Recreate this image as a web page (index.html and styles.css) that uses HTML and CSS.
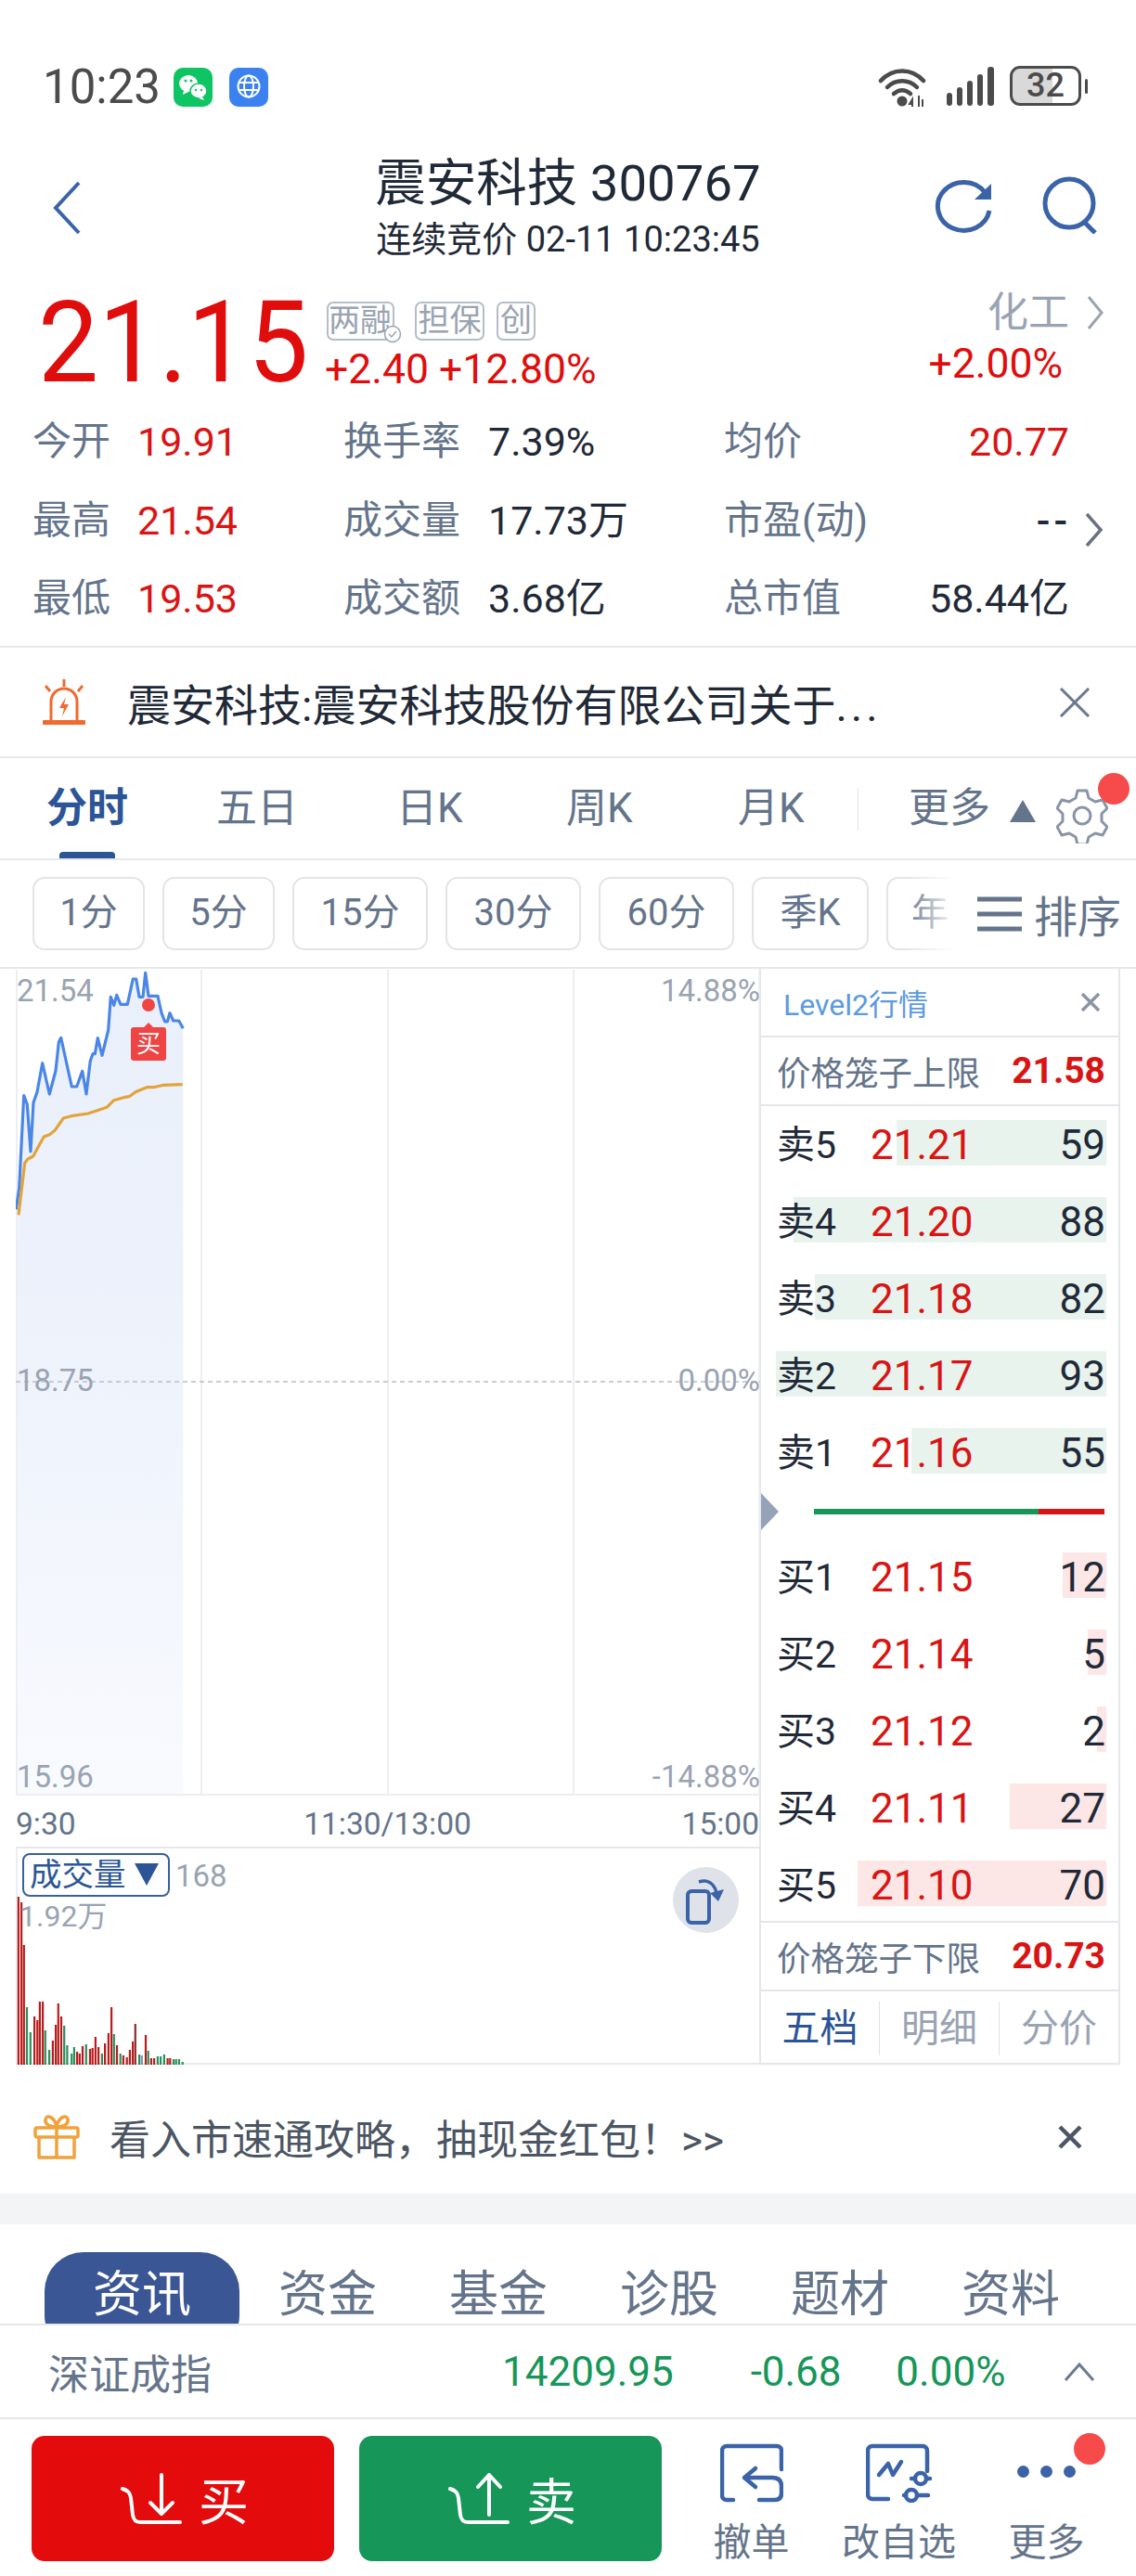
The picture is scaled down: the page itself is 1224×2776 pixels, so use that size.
FILE: index.html
```html
<!DOCTYPE html>
<html lang="zh-CN">
<head>
<meta charset="utf-8">
<title>震安科技 300767</title>
<link rel="stylesheet" href="styles.css">
</head>
<body>
<div class="page">
  <div class="status">
    <span class="clock">10:23</span>
    <svg class="app-icon" viewBox="0 0 42 42"><rect width="42" height="42" rx="10" fill="#0ec463"/><ellipse cx="16" cy="17" rx="10" ry="9" fill="#fff"/><path d="M11 24l-1 5 6-3z" fill="#fff"/><ellipse cx="27" cy="25" rx="9" ry="8" fill="#fff" stroke="#0ec463" stroke-width="1.5"/><path d="M31 31l2 4-6-2z" fill="#fff"/><circle cx="13" cy="14" r="1.5" fill="#0ec463"/><circle cx="19" cy="14" r="1.5" fill="#0ec463"/><circle cx="24" cy="24" r="1.2" fill="#0ec463"/><circle cx="30" cy="24" r="1.2" fill="#0ec463"/></svg>
    <svg class="app-icon second" viewBox="0 0 42 42"><rect width="42" height="42" rx="10" fill="#3b82f0"/><circle cx="21" cy="20" r="11.5" fill="none" stroke="#fff" stroke-width="2"/><ellipse cx="21" cy="20" rx="5" ry="11.5" fill="none" stroke="#fff" stroke-width="2"/><path d="M10 16h22M10 24h22" stroke="#fff" stroke-width="2"/></svg>
    <span class="status-gap"></span>
    <svg class="wifi" width="54" height="44" viewBox="0 0 54 44"><g fill="none" stroke="#4b4b4b" stroke-width="4.5" stroke-linecap="round"><path d="M3 16C16 2 36 2 49 16"/><path d="M10 23c9-9 23-9 32 0"/><path d="M17 30c6-5 12-5 18 0"/></g><circle cx="26" cy="38" r="5.5" fill="#4b4b4b"/><path d="M37 36l-3 5h3v3zM44 32v12M48 36v8" stroke="#4b4b4b" stroke-width="2" fill="none"/></svg>
    <svg class="signal" width="52" height="42" viewBox="0 0 52 42"><g fill="#4b4b4b"><rect x="0" y="28" width="6" height="14" rx="3"/><rect x="11" y="22" width="6" height="20" rx="3"/><rect x="22" y="15" width="6" height="27" rx="3"/><rect x="33" y="8" width="6" height="34" rx="3"/><rect x="44" y="0" width="7" height="42" rx="3"/></g></svg>
    <span class="battery"><span class="battery-level">32</span></span>
    <span class="battery-tip"></span>
  </div>

  <header class="header">
    <svg class="back" width="32" height="58" viewBox="0 0 32 58"><path d="M29 2L4 29l25 27" fill="none" stroke="#3a63a8" stroke-width="4"/></svg>
    <div class="title-block">
      <div class="title">震安科技 300767</div>
      <div class="subtitle">连续竞价 02-11 10:23:45</div>
    </div>
    <svg class="refresh" width="64" height="62" viewBox="0 0 64 62"><path d="M59 35a28 26 0 1 1-5-20" fill="none" stroke="#3a63a8" stroke-width="5"/><path d="M61 6v17H43z" fill="#3a63a8"/></svg>
    <svg class="search" width="62" height="62" viewBox="0 0 62 62"><circle cx="30" cy="29" r="26" fill="none" stroke="#3a63a8" stroke-width="5"/><path d="M45 48l13 13" stroke="#3a63a8" stroke-width="5"/></svg>
  </header>

  <section class="quote">
    <div class="price">21.15</div>
    <div class="quote-mid">
      <div class="tags">
        <span class="tag tag-wide">两融<svg class="tag-check" width="20" height="20" viewBox="0 0 20 20"><circle cx="10" cy="10" r="8.5" fill="#fff" stroke="#9aa3b2" stroke-width="1.5"/><path d="M6 10l3 3 5-6" fill="none" stroke="#9aa3b2" stroke-width="1.5"/></svg></span>
        <span class="tag tag-mid">担保</span>
        <span class="tag tag-one">创</span>
      </div>
      <div class="change">+2.40 +12.80%</div>
    </div>
    <div class="quote-right">
      <div class="sector">化工<svg width="20" height="38" viewBox="0 0 20 38"><path d="M3 2l14 17L3 36" fill="none" stroke="#9aa3b2" stroke-width="3"/></svg></div>
      <div class="sector-change">+2.00%</div>
    </div>
  </section>

  <section class="stats">
    <span class="lbl">今开</span><span class="val red">19.91</span><span class="lbl">换手率</span><span class="val">7.39%</span><span class="pair"><span class="lbl">均价</span><span class="val red">20.77</span></span>
    <span class="lbl">最高</span><span class="val red">21.54</span><span class="lbl">成交量</span><span class="val">17.73万</span><span class="pair"><span class="lbl">市盈(动)</span><span class="val dashes">--</span></span>
    <span class="lbl">最低</span><span class="val red">19.53</span><span class="lbl">成交额</span><span class="val">3.68亿</span><span class="pair"><span class="lbl">总市值</span><span class="val">58.44亿</span></span>
    <svg class="stats-arrow" width="22" height="38" viewBox="0 0 22 38"><path d="M3 2l15 17L3 36" fill="none" stroke="#6b7280" stroke-width="3.5"/></svg>
  </section>

  <section class="notice">
    <svg class="alarm" width="52" height="52" viewBox="0 0 52 52"><g fill="none" stroke="#ef6a2e" stroke-width="3"><path d="M12 46V25a14 14 0 0 1 28 0v21"/><path d="M26 1v8M6 8l5 6M46 8l-5 6"/></g><rect x="3" y="45" width="46" height="5" rx="1" fill="#ef6a2e"/><path d="M28 20l-7 12h5l-2 9 7-13h-5z" fill="#ef6a2e"/></svg>
    <span class="notice-text">震安科技:震安科技股份有限公司关于<span class="ellipsis">...</span></span>
    <svg class="notice-close" width="34" height="32" viewBox="0 0 34 32"><path d="M2 1l30 30M32 1L2 31" stroke="#6b7a90" stroke-width="3"/></svg>
  </section>

  <nav class="period-tabs">
    <span class="ptab ptab-active">分时</span>
    <span class="ptab p2">五日</span>
    <span class="ptab p3">日K</span>
    <span class="ptab p4">周K</span>
    <span class="ptab p5">月K</span>
    <span class="ptab-divider"></span>
    <span class="ptab p6">更多</span>
    <span class="tri-up"></span>
    <svg class="gear" width="56" height="60" viewBox="0 0 56 60"><g fill="none" stroke="#8a94a6" stroke-width="3"><path d="M23 3h10l2 8 7 4 8-2 5 9-6 6v8l6 6-5 9-8-2-7 4-2 8H23l-2-8-7-4-8 2-5-9 6-6v-8l-6-6 5-9 8 2 7-4z" stroke-linejoin="round"/><circle cx="28" cy="30" r="9"/></g></svg>
    <span class="red-dot dot-gear"></span>
  </nav>

  <div class="chips-row">
    <span class="chip c1">1分</span><span class="chip c1">5分</span><span class="chip c2">15分</span><span class="chip c2">30分</span><span class="chip c2">60分</span><span class="chip c3">季K</span><span class="chip c4">年</span>
    <span class="sort"><svg width="50" height="40" viewBox="0 0 50 40"><path d="M1 4h48M1 20h48M1 36h48" stroke="#64748b" stroke-width="5"/></svg><span>排序</span></span>
  </div>

  <div class="market">
    <div class="charts">
      <div class="plot">
        <svg class="plot-svg" width="802" height="890" viewBox="17 1045 802 890">
          <defs><linearGradient id="area" x1="0" y1="0" x2="0" y2="1"><stop offset="0" stop-color="#eaf0fb"/><stop offset="0.35" stop-color="#ecf1fb"/><stop offset="1" stop-color="#f8fafe"/></linearGradient></defs>
          <path fill="url(#area)" d="M17.3 1303.3L20.7 1280 25.7 1180.7 29.3 1190 33 1241 36 1188.3 40 1176.7 45.7 1145.7 53.3 1179 60 1154 63.3 1123.3 65.7 1118.3 77.3 1171 82.7 1171 88.7 1154.3 93 1179 97.3 1143.3 100 1135.7 102.3 1135.7 105.3 1118.7 110 1137.3 116.7 1110 119.3 1074.3 122.7 1083.3 125.7 1072.3 130 1082.3 137.3 1082.3 143.3 1055 146.7 1055 150 1074.3 154 1074.3 156.7 1048.3 160 1073.3 170 1073.3 174 1091.7 177.7 1101 180.3 1101 183 1091.7 186.7 1100 192.7 1100 197.3 1108.3V1934H17.3z"/>
          <g stroke="#eceef2" stroke-width="2"><path d="M18 1045v889M217 1045v889M418 1045v889M618 1045v889M818 1045v889M17 1934h802"/></g>
          <path d="M17 1489h802" stroke="#b8bec8" stroke-width="1.5" stroke-dasharray="5 4"/>
          <path fill="none" stroke="#4a86e8" stroke-width="3.2" stroke-linejoin="round" d="M17.3 1303.3L20.7 1280 25.7 1180.7 29.3 1190 33 1241 36 1188.3 40 1176.7 45.7 1145.7 53.3 1179 60 1154 63.3 1123.3 65.7 1118.3 77.3 1171 82.7 1171 88.7 1154.3 93 1179 97.3 1143.3 100 1135.7 102.3 1135.7 105.3 1118.7 110 1137.3 116.7 1110 119.3 1074.3 122.7 1083.3 125.7 1072.3 130 1082.3 137.3 1082.3 143.3 1055 146.7 1055 150 1074.3 154 1074.3 156.7 1048.3 160 1073.3 170 1073.3 174 1091.7 177.7 1101 180.3 1101 183 1091.7 186.7 1100 192.7 1100 197.3 1108.3"/>
          <path fill="none" stroke="#e3a33b" stroke-width="3.2" stroke-linejoin="round" d="M20 1309.3L26.7 1253.3 30 1249 35.7 1246 41.7 1235 47.3 1225 53.3 1222.7 59 1218.3 68.3 1205 76.7 1202.7 95 1200 115 1193.3 122.7 1185.7 133.3 1182.7 139.3 1181.7 146 1176.7 158.3 1171.7 165 1171.7 176.7 1169.3 196.7 1168.7"/>
          <circle cx="160" cy="1083" r="7" fill="#ef4444"/>
        </svg>
        <span class="plot-label at-tl">21.54</span>
        <span class="plot-label at-tr">14.88%</span>
        <span class="plot-label at-ml">18.75</span>
        <span class="plot-label at-mr">0.00%</span>
        <span class="plot-label at-bl">15.96</span>
        <span class="plot-label at-br">-14.88%</span>
        <span class="buy-badge">买</span>
      </div>
      <div class="time-axis"><span>9:30</span><span>11:30/13:00</span><span class="time-end">15:00</span></div>
      <div class="volume">
        <svg class="vol-svg" width="190" height="190" viewBox="0 0 190 190">
          <g fill="#b81c1c"><rect x="1.8" y="9" width="2.2" height="181"/><rect x="5" y="15" width="2.2" height="175"/><rect x="7.7" y="61" width="2.2" height="129"/><rect x="19" y="138" width="2.2" height="52"/><rect x="22.2" y="142" width="2.2" height="48"/><rect x="24.8" y="122" width="2.2" height="68"/><rect x="28" y="122" width="2.2" height="68"/><rect x="38.8" y="164" width="2.2" height="26"/><rect x="42" y="147" width="2.2" height="43"/><rect x="44.7" y="124" width="2.2" height="66"/><rect x="47.9" y="138" width="2.2" height="52"/><rect x="65" y="176" width="2.2" height="14"/><rect x="67.7" y="178" width="2.2" height="12"/><rect x="70.9" y="170" width="2.2" height="20"/><rect x="78.9" y="173" width="2.2" height="17"/><rect x="81.6" y="172" width="2.2" height="18"/><rect x="84.8" y="160" width="2.2" height="30"/><rect x="88" y="171" width="2.2" height="19"/><rect x="95" y="167" width="2.2" height="23"/><rect x="98.8" y="156" width="2.2" height="34"/><rect x="102" y="128" width="2.2" height="62"/><rect x="107.9" y="169" width="2.2" height="21"/><rect x="114.8" y="180" width="2.2" height="10"/><rect x="118.6" y="182" width="2.2" height="8"/><rect x="121.8" y="174" width="2.2" height="16"/><rect x="125" y="165" width="2.2" height="25"/><rect x="127.7" y="146" width="2.2" height="44" fill="#8f2b2b"/><rect x="138.9" y="158" width="2.2" height="32"/><rect x="144.8" y="183" width="2.2" height="7"/><rect x="148" y="183" width="2.2" height="7"/><rect x="162.5" y="183" width="2.2" height="7"/><rect x="165.2" y="183" width="2.2" height="7"/></g>
          <g fill="#2a8f5c"><rect x="10.9" y="128" width="2.2" height="62"/><rect x="14.7" y="155" width="2.2" height="35"/><rect x="30.7" y="153" width="2.2" height="37"/><rect x="35" y="174" width="2.2" height="16"/><rect x="51.1" y="148" width="2.2" height="42"/><rect x="54.3" y="169" width="2.2" height="21"/><rect x="59.1" y="178" width="2.2" height="12"/><rect x="61.8" y="171" width="2.2" height="19"/><rect x="74.7" y="168" width="2.2" height="22"/><rect x="91.8" y="178" width="2.2" height="12"/><rect x="104.7" y="157" width="2.2" height="33"/><rect x="111.6" y="178" width="2.2" height="12"/><rect x="132" y="179" width="2.2" height="11"/><rect x="141.6" y="175" width="2.2" height="15"/><rect x="151.8" y="181" width="2.2" height="9"/><rect x="155" y="181" width="2.2" height="9"/><rect x="158.8" y="179" width="2.2" height="11"/><rect x="168.9" y="184" width="2.2" height="6"/><rect x="171.6" y="184" width="2.2" height="6"/><rect x="174.8" y="184" width="2.2" height="6"/><rect x="178.6" y="187" width="2.2" height="3"/></g>
          <rect x="134.7" y="180" width="2.2" height="10" fill="#7c93a8"/>
        </svg>
        <span class="vol-select">成交量<span class="tri-down"></span></span>
        <span class="vol-num">168</span>
        <span class="vol-max">1.92万</span>
        <span class="rotate"><svg width="44" height="52" viewBox="0 0 44 52"><rect x="2" y="16" width="23" height="34" rx="4" fill="none" stroke="#3a63a8" stroke-width="4"/><path d="M14 6c10-3 17 2 19 12" fill="none" stroke="#3a63a8" stroke-width="3.5"/><path d="M26 18l15-4-6 13z" fill="#3a63a8"/></svg></span>
      </div>
    </div>

    <aside class="book">
      <div class="book-head"><span class="level2">Level2行情</span><svg width="22" height="22" viewBox="0 0 22 22"><path d="M2 2l18 18M20 2L2 20" stroke="#8a94a6" stroke-width="3.5"/></svg></div>
      <div class="cage"><span>价格笼子上限</span><b>21.58</b></div>
      <div class="rows rows-sell">
        <div class="row"><i class="bar sell" style="width:226px"></i><span class="side">卖5</span><span class="rp">21.21</span><span class="qty">59</span></div>
        <div class="row"><i class="bar sell" style="width:337px"></i><span class="side">卖4</span><span class="rp">21.20</span><span class="qty">88</span></div>
        <div class="row"><i class="bar sell" style="width:314px"></i><span class="side">卖3</span><span class="rp">21.18</span><span class="qty">82</span></div>
        <div class="row"><i class="bar sell" style="width:356px"></i><span class="side">卖2</span><span class="rp">21.17</span><span class="qty">93</span></div>
        <div class="row"><i class="bar sell" style="width:210px"></i><span class="side">卖1</span><span class="rp">21.16</span><span class="qty">55</span></div>
      </div>
      <div class="balance"><span class="bal-tri"></span><span class="bal-green"></span><span class="bal-red"></span></div>
      <div class="rows rows-buy">
        <div class="row"><i class="bar buy" style="width:47px"></i><span class="side">买1</span><span class="rp">21.15</span><span class="qty">12</span></div>
        <div class="row"><i class="bar buy" style="width:20px"></i><span class="side">买2</span><span class="rp">21.14</span><span class="qty">5</span></div>
        <div class="row"><i class="bar buy" style="width:10px"></i><span class="side">买3</span><span class="rp">21.12</span><span class="qty">2</span></div>
        <div class="row"><i class="bar buy" style="width:104px"></i><span class="side">买4</span><span class="rp">21.11</span><span class="qty">27</span></div>
        <div class="row"><i class="bar buy" style="width:268px"></i><span class="side">买5</span><span class="rp">21.10</span><span class="qty">70</span></div>
      </div>
      <div class="cage cage-low"><span>价格笼子下限</span><b>20.73</b></div>
      <div class="book-tabs"><span class="btab active">五档</span><span class="btab">明细</span><span class="btab">分价</span></div>
    </aside>
  </div>

  <section class="promo">
    <svg width="50" height="48" viewBox="0 0 50 48"><g fill="none" stroke="#f0a23c" stroke-width="3.5" stroke-linejoin="round"><rect x="2" y="14" width="46" height="10" rx="2"/><path d="M6 24v22h38V24M25 14v32"/><path d="M25 13c-6 0-13-2-12-8s10-3 12 8c2-11 11-14 12-8s-6 8-12 8z"/></g></svg>
    <span class="promo-text">看入市速通攻略，抽现金红包！&gt;&gt;</span>
    <svg class="promo-close" width="26" height="26" viewBox="0 0 26 26"><path d="M2 2l22 22M24 2L2 24" stroke="#4b5563" stroke-width="4.5"/></svg>
  </section>
  <div class="band"></div>

  <nav class="info-tabs">
    <span class="itab itab-active">资讯</span>
    <span class="itab">资金</span>
    <span class="itab">基金</span>
    <span class="itab">诊股</span>
    <span class="itab">题材</span>
    <span class="itab">资料</span>
  </nav>

  <section class="ticker">
    <span class="tk-name">深证成指</span>
    <span class="tk-val">14209.95</span>
    <span class="tk-chg">-0.68</span>
    <span class="tk-pct">0.00%</span>
    <svg class="tk-caret" width="34" height="22" viewBox="0 0 34 22"><path d="M2 20L17 3l15 17" fill="none" stroke="#6b7a90" stroke-width="3"/></svg>
  </section>

  <footer class="actions">
    <div class="trade trade-buy">
      <svg width="68" height="58" viewBox="0 0 68 58"><g fill="none" stroke="#fff" stroke-width="4" stroke-linecap="round" stroke-linejoin="round"><path d="M2 18c6 2 8 4 9 10l2 18c1 6 3 8 8 8h43"/><path d="M44 3v42M32 33l12 12 12-12"/></g></svg>
      <span>买</span>
    </div>
    <div class="trade trade-sell">
      <svg width="68" height="58" viewBox="0 0 68 58"><g fill="none" stroke="#fff" stroke-width="4" stroke-linecap="round" stroke-linejoin="round"><path d="M2 18c6 2 8 4 9 10l2 18c1 6 3 8 8 8h43"/><path d="M44 46V3M32 16L44 3l12 13"/></g></svg>
      <span>卖</span>
    </div>
    <div class="tool tool-first">
      <svg width="68" height="64" viewBox="0 0 68 64"><g fill="none" stroke="#3a63a8" stroke-width="4.5" stroke-linecap="round" stroke-linejoin="round"><path d="M14 61H7a5 5 0 0 1-5-5V8a5 5 0 0 1 5-5h54a5 5 0 0 1 5 5v20"/><path d="M38 27L26 37l12 10"/><path d="M27 37h29c8 0 10 4 10 9v8c0 5-3 7-8 7H42"/></g></svg>
      <span>撤单</span>
    </div>
    <div class="tool">
      <svg width="72" height="64" viewBox="0 0 72 64"><g fill="none" stroke="#3a63a8" stroke-width="4.5" stroke-linecap="round" stroke-linejoin="round"><path d="M24 60H7a5 5 0 0 1-5-5V8a5 5 0 0 1 5-5h54a5 5 0 0 1 5 5v22"/><path d="M14 34l10-12 5 12 9-14"/><circle cx="59" cy="38" r="6"/><circle cx="49" cy="56" r="6"/><path d="M49 38h4M65 38h4M41 56h2M55 56h12"/></g></svg>
      <span>改自选</span>
    </div>
    <div class="tool">
      <div class="more-dots"><i></i><i></i><i></i></div>
      <span>更多</span>
      <span class="red-dot dot-more"></span>
    </div>
  </footer>
</div>
</body>
</html>
```
FILE: styles.css
```css
* { box-sizing: border-box; }
html, body { margin: 0; padding: 0; background: #fff; }
body { font-family: Roboto, "Noto Sans CJK SC", sans-serif; color: #1f2937; }
.page { width: 1224px; height: 2776px; overflow: hidden; position: relative; }
svg { display: block; flex: none; }

.status { height: 150px; padding: 71px 52px 0 46px; display: flex; align-items: flex-start; }
.clock { font-size: 51px; line-height: 46px; color: #4b4b4b; width: 141px; }
.app-icon { width: 42px; height: 42px; margin-top: 2px; }
.app-icon.second { margin-left: 18px; }
.status-gap { flex: 1; }
.wifi { margin-top: 0; }
.signal { margin: 1px 16px 0 20px; }
.battery { width: 77px; height: 43px; border: 3.5px solid #4b4b4b; border-radius: 11px; overflow: hidden; display: block; background: linear-gradient(90deg, #d9d9d9 60%, #fff 60%); }
.battery-level { display: block; text-align: center; font-size: 36px; line-height: 36px; color: #4b4b4b; font-weight: 500; }
.battery-tip { width: 3px; height: 16px; margin: 14px 0 0 4px; background: #4b4b4b; border-radius: 2px; }

.header { height: 150px; display: flex; align-items: flex-start; position: relative; }
.back { margin: 45px 0 0 56px; }
.title-block { position: absolute; left: 0; right: 0; top: 17px; text-align: center; color: #1f2937; }
.title { font-size: 54.5px; line-height: 60px; }
.subtitle { font-size: 38px; line-height: 44px; margin-top: 9px; }
.refresh { margin: 42px 0 0 919px; }
.search { margin: 40px 0 0 51px; }

.quote { height: 134px; position: relative; display: flex; align-items: flex-start; }
.price { font-size: 116px; line-height: 120px; color: #e00d0d; margin: 9px 0 0 41px; width: 311px; white-space: nowrap; transform: scaleY(1.06); transform-origin: 50% 50%; }
.quote-mid { padding-top: 25px; }
.tags { display: flex; gap: 13px; height: 42px; }
.tag { height: 42px; border: 2px solid #b6bcc8; border-radius: 7px; color: #9aa3b2; font-size: 34px; line-height: 36px; position: relative; text-align: center; white-space: nowrap; }
.tag-wide { width: 73px; margin-right: 9px; text-align: left; }
.tag-mid { width: 75px; }
.tag-one { width: 42px; }
.tag-check { position: absolute; right: -10px; bottom: -5px; }
.change { font-size: 44.5px; line-height: 46px; color: #e00d0d; margin-top: 8px; margin-left: -2px; white-space: nowrap; }
.quote-right { margin-left: auto; margin-right: 34px; padding-top: 14px; text-align: right; }
.sector { display: flex; align-items: center; justify-content: flex-end; gap: 18px; font-size: 44px; line-height: 46px; color: #9aa3b2; }
.sector-change { font-size: 44.5px; line-height: 48px; color: #e00d0d; margin-top: 8px; margin-right: 45px; }

.stats { height: 264px; padding: 0 0 0 35px; display: grid; grid-template-columns: 113px 222px 156px 254px 372px; grid-auto-rows: 84.5px; align-items: center; border-bottom: 2px solid #e7e8eb; position: relative; font-size: 42px; line-height: 50px; }
.lbl { color: #64748b; display: block; height: 50px; }
.val { color: #1f2937; display: block; height: 50px; font-size: 43px; }
.val.red { color: #d91414; }
.dashes { letter-spacing: 4px; margin-right: -2px; font-weight: 500; }
.pair { display: flex; justify-content: space-between; }
.stats-arrow { position: absolute; left: 1168px; top: 118px; }

.notice { height: 119px; display: flex; align-items: center; padding: 0 49px 0 43px; border-bottom: 2px solid #e7e8eb; }
.notice-text { font-size: 47px; margin-left: 42px; flex: 1; white-space: nowrap; color: #1f2937; }
.ellipsis { letter-spacing: 4px; }

.period-tabs { height: 110px; display: flex; align-items: center; position: relative; border-bottom: 2px solid #e7e8eb; font-size: 44px; color: #64748b; padding-bottom: 12px; }
.ptab { position: absolute; top: 26px; line-height: 56px; }
.ptab-active { left: 50px; color: #2c5597; font-weight: 700; font-size: 44px; }
.ptab-active::after { content: ""; position: absolute; left: 14px; right: 14px; bottom: -26px; height: 7px; background: #2c5597; border-radius: 4px 4px 0 0; }
.p2 { left: 233px; } .p3 { left: 427px; } .p4 { left: 610px; } .p5 { left: 795px; } .p6 { left: 979px; }
.ptab-divider { position: absolute; left: 924px; top: 32px; width: 1px; height: 46px; background: #e0e2e6; }
.tri-up { position: absolute; left: 1088px; top: 45px; width: 0; height: 0; border: 14px solid transparent; border-top: 0; border-bottom: 24px solid #64748b; }
.gear { position: absolute; left: 1138px; top: 32px; }
.red-dot { position: absolute; width: 34px; height: 34px; border-radius: 50%; background: #f74b4b; }
.dot-gear { left: 1183px; top: 16px; }

.chips-row { height: 117px; padding: 18px 0 0 35px; display: flex; gap: 19px; position: relative; overflow: hidden; border-bottom: 2px solid #e7e8eb; }
.chip { height: 79px; flex: none; border: 2px solid #e2e4e8; border-radius: 13px; text-align: center; font-size: 40px; line-height: 73px; color: #64748b; }
.c1 { width: 121px; } .c2 { width: 146px; } .c3 { width: 126px; } .c4 { width: 130px; text-align: left; padding-left: 25px; }
.sort { position: absolute; right: 0; top: 0; height: 115px; width: 249px; padding: 0 18px 0 77px; display: flex; align-items: center; gap: 12px; font-size: 47px; color: #64748b; background: linear-gradient(90deg, rgba(255,255,255,0) 0, #fff 55px); white-space: nowrap; }

.market { height: 1181px; display: flex; }
.charts { width: 818px; padding-left: 17px; flex: none; }
.plot { height: 890px; position: relative; }
.plot-svg { position: absolute; left: 0; top: 1px; }
.plot-label { position: absolute; font-size: 33px; line-height: 36px; color: #9aa3b2; }
.at-tl { left: 1px; top: 6px; } .at-tr { right: -1px; top: 6px; }
.at-ml { left: 1px; top: 426px; } .at-mr { right: -1px; top: 426px; }
.at-bl { left: 1px; top: 853px; } .at-br { right: -1px; top: 853px; }
.buy-badge { position: absolute; left: 124px; top: 63px; width: 38px; height: 36px; border-radius: 3px; background: #ee4444; color: #fff; font-size: 26px; line-height: 36px; text-align: center; }
.buy-badge::before { content: ""; position: absolute; left: 14px; top: -5px; border: 5px solid transparent; border-top: 0; border-bottom: 5px solid #ee4444; }
.time-axis { height: 56px; display: grid; grid-template-columns: 1fr auto 1fr; align-items: center; font-size: 33.5px; color: #64748b; padding-top: 6px; }
.time-end { text-align: right; }
.volume { height: 235px; border: 2px solid #e7e8eb; border-left-color: #eceef2; border-right: 0; position: relative; }
.vol-svg { position: absolute; left: -2px; bottom: -2px; }
.vol-select { position: absolute; left: 5px; top: 5px; width: 159px; height: 47px; border: 2px solid #3a5f9e; border-radius: 8px; font-size: 34.5px; line-height: 42px; color: #2c5597; padding-left: 6px; white-space: nowrap; }
.tri-down { display: inline-block; margin-left: 9px; border: 13px solid transparent; border-bottom: 0; border-top: 24px solid #2c5597; }
.vol-num { position: absolute; left: 170px; top: 11px; font-size: 33px; line-height: 38px; color: #9aa3b2; }
.vol-max { position: absolute; left: 2px; top: 54px; font-size: 32px; line-height: 38px; color: #9aa3b2; }
.rotate { position: absolute; left: 706px; top: 20px; width: 71px; height: 71px; border-radius: 50%; background: #e0e2ea; display: flex; align-items: center; justify-content: center; }

.book { width: 389px; flex: none; border: solid #e4e6ea; border-width: 0 2px 2px 2px; display: flex; flex-direction: column; }
.book-head { height: 74px; display: flex; align-items: center; justify-content: space-between; padding: 0 19px 0 24px; border-bottom: 2px solid #e4e6ea; }
.level2 { font-size: 32px; color: #5b9ae0; }
.cage { height: 74px; display: flex; align-items: center; justify-content: space-between; padding: 0 14px 0 17px; border-bottom: 2px solid #e4e6ea; font-size: 36.5px; color: #64748b; }
.cage b { font-size: 39px; color: #d91414; font-weight: 700; }
.rows { display: flex; flex-direction: column; gap: 34px; }
.rows-sell { padding-top: 15px; }
.row { height: 49px; padding-top: 5px; position: relative; display: flex; align-items: center; font-size: 44px; line-height: 50px; color: #1f2937; }
.bar { position: absolute; right: 13px; top: 0; height: 49px; }
.bar.sell { background: #e8f3ee; }
.bar.buy { background: #fce6e6; }
.side { position: relative; width: 101px; margin-left: 17px; white-space: nowrap; font-size: 41px; }
.rp { position: relative; color: #d91414; }
.qty { position: relative; margin-left: auto; margin-right: 14px; }
.balance { height: 85px; position: relative; display: flex; padding: 38px 14px 0 57px; }
.bal-tri { position: absolute; left: 0; top: 21px; border: 20px solid transparent; border-right: 0; border-left: 19px solid #94a3b8; }
.bal-green { width: 242px; height: 6px; background: #169658; }
.bal-red { width: 71px; height: 6px; background: #d91414; }
.rows-buy { padding-top: 0; }
.cage-low { height: 76px; border-top: 2px solid #e4e6ea; margin-top: 16px; }
.book-tabs { flex: 1; display: flex; align-items: center; font-size: 41px; color: #9aa3b2; padding-top: 2px; }
.btab { flex: 1; text-align: center; border-left: 1px solid #dfe1e6; line-height: 58px; }
.btab:first-child { border-left: 0; flex: 0 0 127px; }
.btab.active { color: #2c5597; }

.promo { height: 139px; display: flex; align-items: center; padding: 16px 58px 0 36px; }
.promo-text { font-size: 44px; color: #4b5563; margin-left: 32px; flex: 1; white-space: nowrap; }
.band { height: 33px; background: #f3f4f6; }

.info-tabs { height: 109px; padding: 30px 0 0 48px; display: flex; overflow: hidden; border-bottom: 2px solid #e4e6ea; }
.itab { width: 184px; flex: none; font-size: 53px; line-height: 72px; color: #64748b; text-align: center; padding-top: 10px; white-space: nowrap; }
.itab-active { width: 210px; height: 110px; border-radius: 42px; background: #3a5695; color: #fff; margin-right: 3px; }

.ticker { height: 101px; display: flex; align-items: center; padding: 0 44px 0 52px; border-bottom: 2px solid #e4e6ea; font-size: 44px; color: #169658; white-space: nowrap; }
.tk-name { color: #64748b; width: 490px; }
.tk-val { width: 268px; }
.tk-chg { width: 157px; }
.tk-pct { width: 181px; }

.actions { height: 168px; padding-top: 18px; display: flex; position: relative; padding-left: 34px; }
.trade { width: 326px; height: 135px; border-radius: 14px; color: #fff; display: flex; align-items: center; justify-content: center; gap: 16px; padding-left: 4px; font-size: 54px; margin-right: 27px; }
.trade-buy { background: #e30b0b; }
.trade-sell { background: #169658; }
.tool { width: 159px; flex: none; display: flex; flex-direction: column; align-items: center; font-size: 41px; color: #64748b; position: relative; margin-top: 8px; }
.tool svg { height: 64px; }
.tool span { line-height: 50px; margin-top: 18px; }
.tool-first { margin-left: -10px; }
.more-dots { height: 64px; display: flex; gap: 12px; align-items: center; padding-bottom: 4px; }
.more-dots i { width: 13px; height: 13px; border-radius: 50%; background: #3a63a8; }
.tool .dot-more { left: 109px; top: -11px; margin: 0; }
```
